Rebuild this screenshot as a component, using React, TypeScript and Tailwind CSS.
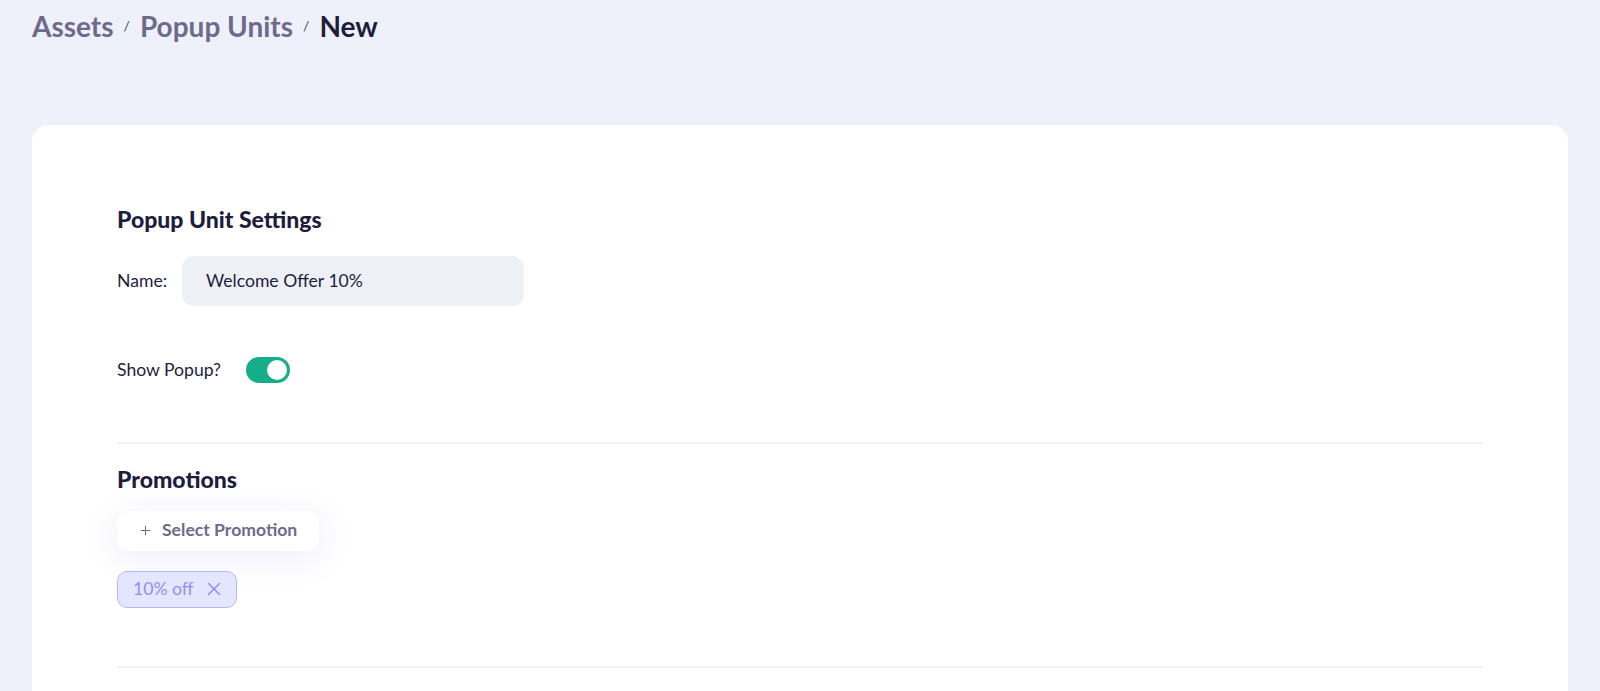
import { X, Plus } from "lucide-react";

const Breadcrumb = () => (
  <nav className="flex items-center pl-8 pt-[10px] text-[28px] leading-[1.2] font-bold">
    <span className="text-[#6f6a8c]">Assets</span>
    <span className="mx-[10px] text-[14px] font-normal text-[#4a4766]">/</span>
    <span className="text-[#6f6a8c]">Popup Units</span>
    <span className="mx-[10px] text-[14px] font-normal text-[#4a4766]">/</span>
    <span className="text-[#1f1d3d]">New</span>
  </nav>
);

const Toggle = ({ on }: { on: boolean }) => (
  <button
    className={`flex h-[26px] w-[44px] items-center rounded-full px-[3px] ${
      on ? "justify-end bg-[#16ad8a]" : "justify-start bg-gray-300"
    }`}
  >
    <span className="block h-[20px] w-[20px] rounded-full bg-white" />
  </button>
);

export default function App() {
  return (
    <div
      className="min-h-[691px] bg-[#eef1f9] text-[#1f1d3d]"
      style={{ fontFamily: "Lato, 'Open Sans', sans-serif" }}
    >
      <Breadcrumb />
      <main className="mx-8 mt-[81px] rounded-2xl bg-white px-[85px] pt-[81px] pb-10">
        <section>
          <h2 className="text-[23px] leading-[26px] font-black">Popup Unit Settings</h2>
          <div className="mt-[24px] flex items-center">
            <label className="w-[65px] text-[17.6px] leading-[1.2]">Name:</label>
            <input
              defaultValue="Welcome Offer 10%"
              className="h-[50px] w-[342px] rounded-xl bg-[#edf1f6] px-6 text-[17.6px] text-[#1f1d3d] outline-none"
            />
          </div>
          <div className="mt-[51px] flex items-center">
            <span className="w-[129px] text-[17.6px] leading-[1.2]">Show Popup?</span>
            <Toggle on />
          </div>
        </section>

        <hr className="mt-[59px] border-t-2 border-[#f1f1f3]" />

        <section className="pt-[22px]">
          <h2 className="text-[23px] leading-[26px] font-black">Promotions</h2>
          <button className="mt-[19px] flex h-[40px] items-center gap-[9px] rounded-xl bg-white pl-[21px] pr-[22px] text-[17.6px] font-bold text-[#6f6a8c] shadow-[0_6px_34px_rgba(120,110,230,0.13)]">
            <Plus size={15} strokeWidth={1.6} />
            Select Promotion
          </button>
          <div className="mt-[20px] flex">
            <span className="flex h-[37px] items-center gap-[9px] rounded-[10px] border border-[#b4b8fb] bg-[#e4e6fe] pl-[15px] pr-[11px] text-[17.6px] text-[#8c91f4]">
              10% off
              <X size={22} strokeWidth={1.6} />
            </span>
          </div>
        </section>

        <hr className="mt-[58px] border-t-2 border-[#f1f1f3]" />
      </main>
    </div>
  );
}
